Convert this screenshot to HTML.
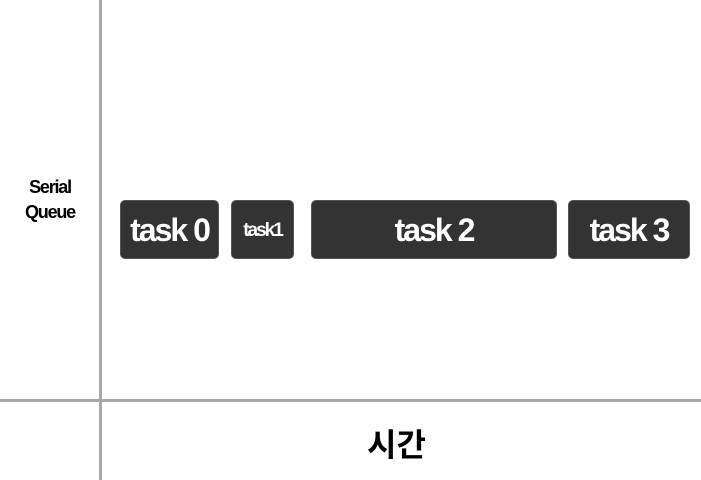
<!DOCTYPE html><html><head><meta charset="utf-8"><style>
body{margin:0;width:701px;height:480px;background:#fff;position:relative;overflow:hidden;font-family:"Liberation Sans","Noto Sans CJK KR",sans-serif}
.v{position:absolute;left:99px;top:0;width:3px;height:480px;background:#a9a9a9}
.h{position:absolute;left:0;top:399px;width:701px;height:3px;background:#a9a9a9}
.b{position:absolute;top:200px;height:59px;background:#333;border-radius:5px;color:#fff;font-weight:bold;display:flex;align-items:center;justify-content:center;letter-spacing:-2px;border:1px solid #555;box-sizing:border-box;padding-top:2px}
.lbl{position:absolute;left:0;width:100px;top:175px;text-align:center;font-weight:bold;font-size:18px;line-height:25px;letter-spacing:-1.2px}
.t{position:absolute;left:367px;top:420px;font-size:32px;font-weight:bold;font-family:"Noto Sans CJK KR",sans-serif}
</style></head><body>
<div class="v"></div><div class="h"></div>
<div class="lbl">Serial<br>Queue</div>
<div class="b" style="left:120px;width:99px;font-size:32px">task 0</div>
<div class="b" style="left:231px;width:63px;font-size:19px">task1</div>
<div class="b" style="left:311px;width:246px;font-size:32px">task 2</div>
<div class="b" style="left:568px;width:122px;font-size:32px">task 3</div>
<div class="t">시간</div>
</body></html>
